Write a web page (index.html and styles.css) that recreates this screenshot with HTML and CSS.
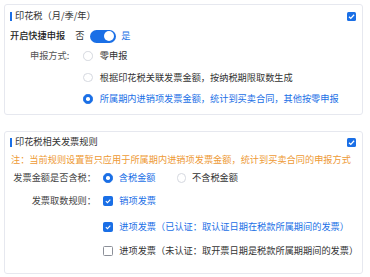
FILE: index.html
```html
<!DOCTYPE html>
<html lang="zh-CN">
<head>
<meta charset="utf-8">
<link rel="stylesheet" href="styles.css">
</head>
<body>
<section class="card card-1">
  <div class="card-head">
    <span class="bar"></span>
    <span class="title">印花税（月/季/年）</span>
    <span class="cb cb-sm checked"><svg viewBox="0 0 10 10"><path d="M2.2 5.2 L4.2 7.1 L7.9 3.1" fill="none" stroke="#fff" stroke-width="1.4"/></svg></span>
  </div>
  <div class="toggle-row">
    <span class="strong">开启快捷申报</span>
    <span class="off">否</span>
    <span class="switch"><span class="knob"></span></span>
    <span class="on">是</span>
  </div>
  <div class="form-1">
    <div class="label-1">申报方式:</div>
    <div class="opts-1">
      <div class="opt-row"><span class="radio"></span><span class="txt">零申报</span></div>
      <div class="opt-row"><span class="radio"></span><span class="txt">根据印花税关联发票金额，按纳税期限取数生成</span></div>
      <div class="opt-row sel"><span class="radio checked"></span><span class="txt">所属期内进销项发票金额，统计到买卖合同，其他按零申报</span></div>
    </div>
  </div>
</section>

<section class="card card-2">
  <div class="card-head">
    <span class="bar"></span>
    <span class="title">印花税相关发票规则</span>
    <span class="cb cb-sm checked"><svg viewBox="0 0 10 10"><path d="M2.2 5.2 L4.2 7.1 L7.9 3.1" fill="none" stroke="#fff" stroke-width="1.4"/></svg></span>
  </div>
  <div class="notice">注：当前规则设置暂只应用于所属期内进销项发票金额，统计到买卖合同的申报方式</div>
  <div class="form-2">
    <div class="label-2">发票金额是否含税：</div>
    <div class="ctl">
      <span class="opt sel"><span class="radio checked"></span><span class="txt">含税金额</span></span>
      <span class="opt"><span class="radio"></span><span class="txt">不含税金额</span></span>
    </div>
    <div class="label-2">发票取数规则：</div>
    <div class="ctl">
      <span class="opt sel"><span class="cb checked"><svg viewBox="0 0 10 10"><path d="M2.3 5.1 L4.3 7.1 L7.9 3.2" fill="none" stroke="#fff" stroke-width="1.3"/></svg></span><span class="txt">销项发票</span></span>
    </div>
    <div class="label-2"></div>
    <div class="ctl">
      <span class="opt sel"><span class="cb checked"><svg viewBox="0 0 10 10"><path d="M2.3 5.1 L4.3 7.1 L7.9 3.2" fill="none" stroke="#fff" stroke-width="1.3"/></svg></span><span class="txt">进项发票（已认证：取认证日期在税款所属期间的发票）</span></span>
    </div>
    <div class="label-2"></div>
    <div class="ctl">
      <span class="opt"><span class="cb"></span><span class="txt">进项发票（未认证：取开票日期是税款所属期期间的发票）</span></span>
    </div>
  </div>
</section>
</body>
</html>
```

FILE: styles.css
```css
* { box-sizing: border-box; }
html, body { background: #fff; }
body {
  margin: 4px 7px 0 4px;
  font-family: "Noto Sans CJK SC", "Noto Sans", sans-serif;
  font-size: 9.2px;
  color: #333;
  line-height: 1;
  white-space: nowrap;
}
.card {
  width: 359px;
  border: 1px solid #e6e8ef;
  border-radius: 3px;
  padding: 0 6px 0 5px;
  background: #fff;
}
.card-1 { padding-bottom: 4px; }
.card-2 { margin-top: 16px; padding-bottom: 10px; }

.card-head {
  display: flex;
  align-items: center;
  height: 22px;
}
.card-2 .card-head { height: 21px; }
.bar {
  width: 2px;
  height: 9px;
  background: #1a6fe6;
  margin-right: 3px;
}
.title { color: #333; flex: 1; }

.cb {
  width: 10px;
  height: 10px;
  border: 1px solid #8c9099;
  border-radius: 1.5px;
  background: #fff;
  display: inline-flex;
  flex: none;
}
.cb.checked { background: #1a6fe6; border-color: #1a6fe6; }
.cb svg { width: 100%; height: 100%; display: block; }
.cb-sm { width: 9px; height: 9px; border: 0; margin-top: 1px; }

.toggle-row {
  display: flex;
  align-items: center;
  height: 18px;
}
.strong { color: #1d1d1d; font-weight: 500; }
.off { margin-left: 10px; color: #333; }
.switch {
  margin-left: 6px;
  width: 26px;
  height: 13px;
  border-radius: 7px;
  background: #1a6fe6;
  display: flex;
  align-items: center;
  justify-content: flex-end;
  padding-right: 2px;
}
.knob { width: 10px; height: 10px; border-radius: 50%; background: #fff; }
.on { margin-left: 5px; color: #1a6fe6; }

.form-1 {
  display: grid;
  grid-template-columns: 73px 1fr;
}
.label-1 {
  padding-left: 20px;
  height: 21.5px;
  display: flex;
  align-items: center;
  color: #555;
}
.opts-1 { display: flex; flex-direction: column; }
.opt-row {
  display: flex;
  align-items: center;
  height: 21.5px;
  gap: 7px;
  padding-left: 0.3px;
}
.sel .txt { color: #1a6fe6; }

.radio {
  width: 9.5px;
  height: 9.5px;
  border-radius: 50%;
  border: 1px solid #d5d8df;
  background: #fff;
  flex: none;
  display: inline-flex;
  align-items: center;
  justify-content: center;
}
.radio.checked { background: #1a6fe6; border-color: #1a6fe6; }
.radio.checked::after {
  content: "";
  width: 3.5px;
  height: 3.5px;
  border-radius: 50%;
  background: #fff;
}

.notice {
  color: #ee9a35;
  height: 15px;
  display: flex;
  align-items: center;
  padding-left: 1px;
}

.form-2 {
  display: grid;
  grid-template-columns: 93px minmax(0, 1fr);
  grid-template-rows: 21px 25px 26px 23px;
}
.label-2 {
  display: flex;
  align-items: center;
  justify-content: flex-end;
  padding-right: 7px;
  color: #444;
}
.ctl { display: flex; align-items: center; padding-left: 0.3px; }
.opt { display: inline-flex; align-items: center; gap: 6px; margin-right: 21px; flex: none; }
```
